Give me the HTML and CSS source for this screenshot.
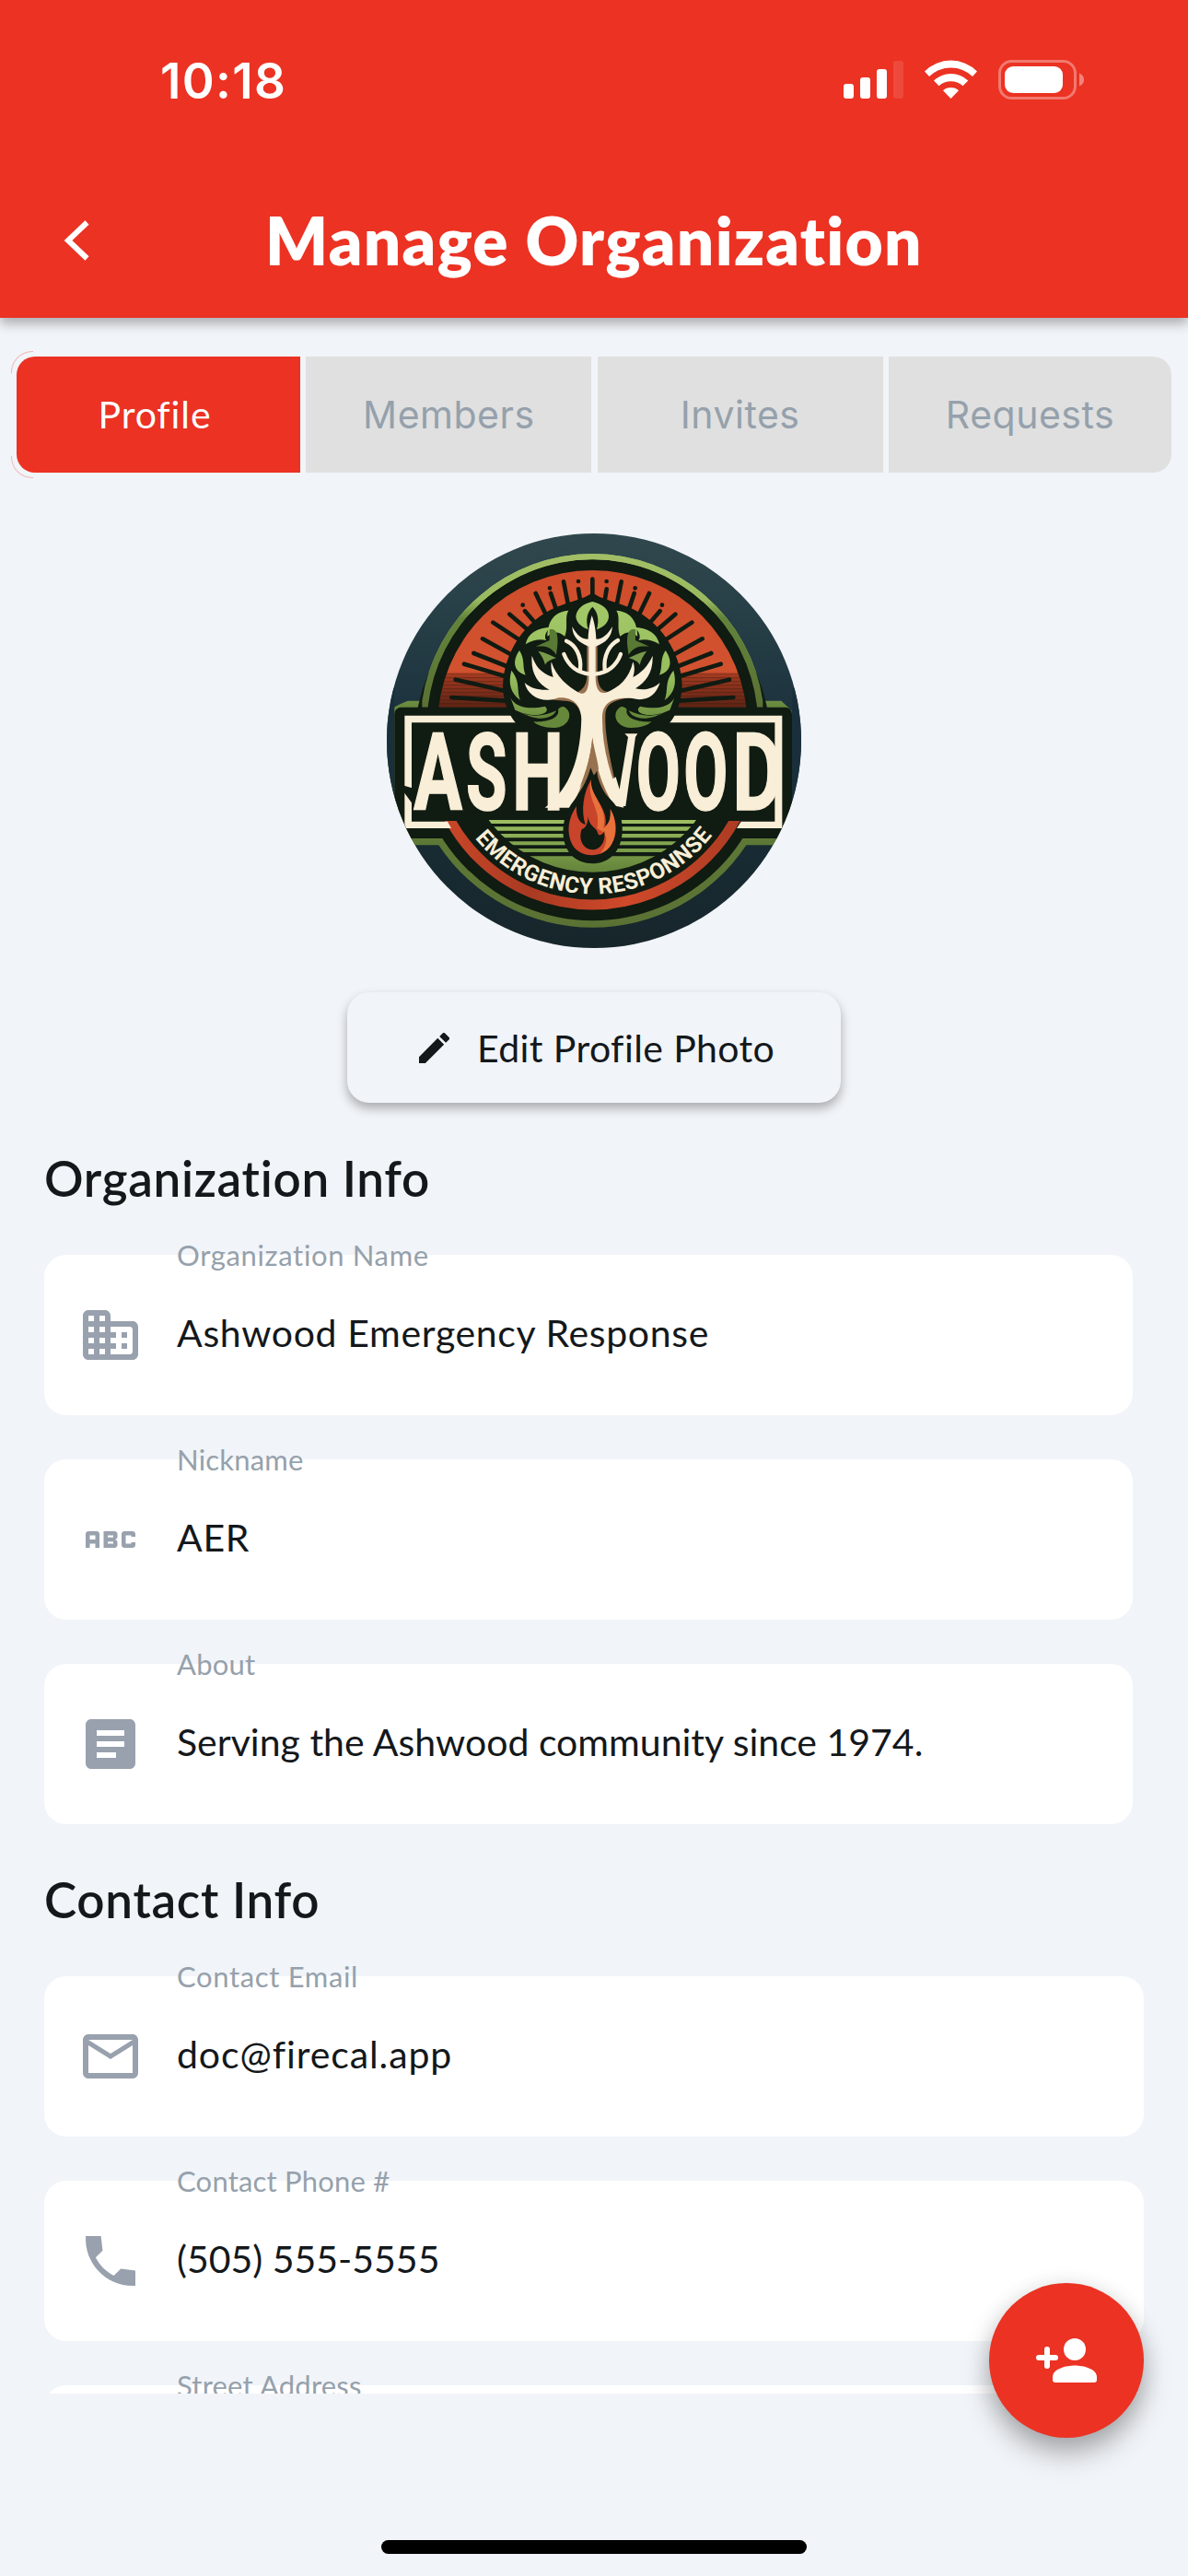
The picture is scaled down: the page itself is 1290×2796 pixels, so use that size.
FILE: index.html
```html
<!DOCTYPE html>
<html lang="en">
<head>
<meta charset="utf-8">
<title>Manage Organization</title>
<link rel="stylesheet" href="styles.css">
</head>
<body>
<div class="screen">
  <header class="header">
    <div class="status">
      <span class="time">10:18</span>
      <svg class="status-icons" viewBox="916 65 262 43">
        <g fill="#fff">
          <rect x="916" y="91" width="11" height="16" rx="3"/>
          <rect x="934" y="84" width="11" height="23" rx="3"/>
          <rect x="952" y="75" width="11" height="32" rx="3"/>
          <rect x="970" y="66" width="11" height="41" rx="3" opacity=".12"/>
          <path d="M1004 77.500A40 40 0 0 1 1061 77.500L1056 83A34 34 0 0 0 1009 83Z"/>
          <path d="M1014 87.500A27 27 0 0 1 1051.300 87.500L1045.500 93.300A19.500 19.500 0 0 0 1019.500 93.300Z"/>
          <path d="M1024 98.300A12.500 12.500 0 0 1 1041 98.300L1032.500 107Z"/>
          <rect x="1091" y="72" width="63" height="29" rx="9"/>
          <path opacity=".4" d="M1172 79.500Q1177 81.500 1177 86.500T1172 93.500Z"/>
        </g>
        <rect x="1085.500" y="66.500" width="82" height="40" rx="13" fill="none" stroke="#fff" stroke-width="3" opacity=".35"/>
      </svg>
    </div>
    <div class="titlebar">
      <svg class="back" viewBox="0 0 28 44"><path d="M25.500 2.500L5 22L25.500 41.500" fill="none" stroke="#fff" stroke-width="6"/></svg>
      <h1 class="title">Manage Organization</h1>
    </div>
  </header>

  <nav class="tabs">
    <div class="tab active">Profile</div>
    <div class="tab">Members</div>
    <div class="tab">Invites</div>
    <div class="tab">Requests</div>
  </nav>

  <main class="content">
    <svg class="logo" viewBox="60 57 1350 1350">
      <defs>
        <linearGradient id="sky" x1="0" y1="0" x2="0" y2="1"><stop offset="0" stop-color="#30484d"/><stop offset=".5" stop-color="#19303c"/><stop offset="1" stop-color="#17262b"/></linearGradient>
        <linearGradient id="rim" x1="0" y1="0" x2="0" y2="1"><stop offset="0" stop-color="#a3bf66"/><stop offset=".3" stop-color="#9aba5f"/><stop offset=".42" stop-color="#62833a"/><stop offset="1" stop-color="#5a7133"/></linearGradient>
        <linearGradient id="dome" x1="0" y1="177" x2="0" y2="622" gradientUnits="userSpaceOnUse"><stop offset="0" stop-color="#cf4d2b"/><stop offset=".74" stop-color="#d2522f"/><stop offset=".77" stop-color="#a13a21"/><stop offset="1" stop-color="#5e2415"/></linearGradient>
        <linearGradient id="band" x1="0" y1="0" x2="1" y2="0"><stop offset="0" stop-color="#d0492a"/><stop offset=".3" stop-color="#a83a22"/><stop offset=".6" stop-color="#d0492a"/><stop offset="1" stop-color="#a83a22"/></linearGradient>
        <linearGradient id="grass" x1="0" y1="990" x2="0" y2="1160" gradientUnits="userSpaceOnUse"><stop offset="0" stop-color="#9dbf62"/><stop offset="1" stop-color="#628339"/></linearGradient>
        <linearGradient id="leaf" x1="0" y1="280" x2="0" y2="690" gradientUnits="userSpaceOnUse"><stop offset="0" stop-color="#a3c868"/><stop offset=".6" stop-color="#96bd5c"/><stop offset="1" stop-color="#66883a"/></linearGradient>
        <clipPath id="disc"><circle cx="735" cy="732" r="675"/></clipPath>
        <clipPath id="upper"><rect x="60" y="57" width="1350" height="566"/></clipPath>
        <clipPath id="lower"><rect x="60" y="993" width="1350" height="420"/></clipPath>
        <clipPath id="meadow"><circle cx="730" cy="738" r="422"/></clipPath>
        <path id="motto" d="M347 1049A494 494 0 0 0 1125 1034"/>
        <g id="rays" fill="none" stroke="#101b12" stroke-width="14" stroke-linecap="round">
          <path d="M271 591L450 602M284 533L450 571M312 482L455 525M343 447L465 495M372 400L480 460M406 347L505 412M460 320L525 376M510 310L545 350M545 252L580 325M594 252L612 305M636 214L652 295M684 238L690 275"/>
          <path d="M503 290h.1M591 235h.1M684 213h.1"/>
        </g>
        <g id="foliage">
          <path fill="url(#leaf)" d="M583 392C585 335 610 312 652 308C638 330 652 360 640 392C620 375 603 375 583 392Z"/>
          <path fill="#587a34" d="M590 370C610 365 625 380 612 452C590 420 570 425 545 425L590 405Z"/>
          <path fill="url(#leaf)" d="M512 418C520 380 550 365 595 362C575 378 572 395 580 405C555 400 535 405 512 418Z"/>
          <path fill="url(#leaf)" d="M492 438C470 470 470 505 512 518C500 490 512 470 492 438Z"/>
          <path fill="url(#leaf)" d="M466 503C455 545 462 575 495 600C482 568 496 540 466 503Z"/>
          <path fill="url(#leaf)" d="M463 592C478 622 520 632 575 620C600 640 550 665 478 632Z"/>
          <path fill="#66883a" d="M538 670C590 672 625 655 618 630C625 622 632 620 638 622C670 640 655 690 605 690C570 690 550 682 538 670Z"/>
          <path fill="#66883a" d="M490 636C520 655 570 655 612 634C600 662 550 672 490 636Z"/>
          <path fill="#78994a" d="M553 440C580 445 595 455 612 462C590 470 580 475 576 485C572 468 565 455 553 440Z"/>
        </g>
      </defs>
      <g clip-path="url(#disc)">
        <rect x="60" y="57" width="1350" height="1350" fill="url(#sky)"/>
        <path fill="url(#rim)" d="M128 602H175A561 561 0 0 1 1285 602H1345L1380 635V1072H1231A602 602 0 0 1 229 1072H60V635L105 612Z"/>
        <path fill="#19303c" d="M60 560H85V1020H60ZM1381 560H1412V1020H1381Z"/>
        <g fill="#101b12">
          <circle cx="730" cy="681" r="539"/>
          <circle cx="730" cy="738" r="580"/>
          <rect x="85" y="623" width="1295" height="427" rx="22"/>
        </g>
        <path clip-path="url(#upper)" fill="url(#rim)" d="M175 623V602A561 561 0 0 1 1285 602V623H1266A539 539 0 0 0 194 623Z"/>
        <circle cx="730" cy="681" r="504" fill="url(#dome)" clip-path="url(#upper)"/>
        <path stroke="#3b1c12" stroke-width="2" opacity=".65" d="M250 515H1210M246 527H1214M242 539H1218M239 551H1221M237 563H1223M235 575H1225M233 587H1227M231 599H1229M230 611H1230"/>
        <use href="#rays"/><use href="#rays" transform="matrix(-1 0 0 1 1460 0)"/>
        <path d="M730 206V260" stroke="#101b12" stroke-width="14" stroke-linecap="round"/>
        <circle cx="730" cy="738" r="528" fill="none" stroke="url(#band)" stroke-width="33" clip-path="url(#lower)"/>
        <g clip-path="url(#meadow)" fill="url(#grass)">
          <path d="M300 990H1160V1002H300ZM300 1012H1160V1025H300ZM300 1035H1160V1048H300ZM300 1060H1160V1072H300ZM300 1083H1160V1095H300ZM300 1108H1160V1170H300Z"/>
        </g>
        <path fill="#f9eed7" d="M118 650H1348V1017H1200L1214 995H1324V673H141V1017H118ZM118 995H258L270 1017H118Z"/>
        <path fill="#101b12" d="M116 878L150 888L142 935L116 900Z"/>
        <path fill="#101b12" d="M730 250C755 270 800 278 850 298A290 290 0 0 1 1022 552C1020 600 1005 655 970 685H490C455 650 438 600 438 552A290 290 0 0 1 610 298C660 278 705 270 730 250Z"/>
        <use href="#foliage"/><use href="#foliage" transform="matrix(-1 0 0 1 1460 0)"/>
        <path fill="url(#leaf)" d="M730 279C765 288 785 305 783 330C780 350 765 362 744 370C754 335 745 310 730 296C715 310 706 335 716 370C690 360 677 345 676 328C678 302 700 285 730 279Z"/>
      </g>
      <g class="wordmark">
        <text x="148" y="957" textLength="158" lengthAdjust="spacingAndGlyphs">A</text>
        <text x="318" y="957" textLength="134" lengthAdjust="spacingAndGlyphs">S</text>
        <text x="468" y="957" textLength="168" lengthAdjust="spacingAndGlyphs">H</text>
        <text x="872" y="957" textLength="144" lengthAdjust="spacingAndGlyphs">O</text>
        <text x="1027" y="957" textLength="144" lengthAdjust="spacingAndGlyphs">O</text>
        <text x="1186" y="957" textLength="164" lengthAdjust="spacingAndGlyphs">D</text>
      </g>
      <g>
        <path fill="#98714f" d="M712 400H746V520C748 560 765 580 800 572L855 590C800 600 772 610 772 650C770 720 790 800 822 946L800 945C765 900 745 860 745 830C735 850 700 870 670 930L640 948C680 880 700 800 695 660C690 620 670 602 640 602L570 596C640 585 712 590 712 520Z"/>
        <path fill="#f9eed7" d="M728 324C736 345 742 375 742 402C765 400 780 385 795 360C792 395 775 412 740 425V510C738 560 750 582 775 575C815 560 850 530 862 475C868 490 868 505 862 525C890 510 910 490 926 455C928 510 905 540 870 562C905 570 930 560 950 543C935 590 900 605 860 594C800 590 765 605 762 650C760 760 790 850 832 950L800 943C760 880 735 800 730 720C722 800 700 880 660 950L575 950C640 900 690 820 694 660C692 610 660 588 620 592C570 612 520 590 509 543C530 562 555 568 590 566C550 545 528 510 533 455C545 490 560 510 602 525C596 505 594 490 596 475C612 525 650 555 685 575C710 588 720 560 718 510V425C685 412 665 395 664 360C680 390 695 400 716 402C716 375 722 345 728 324Z"/>
        <path fill="none" stroke="#f9eed7" stroke-width="13" stroke-linecap="round" d="M722 515C690 512 655 495 637 450M690 500C695 455 675 420 645 407M738 515C770 512 805 495 822 450M770 500C765 455 785 420 813 405"/>
        <path fill="#f9eed7" d="M835 709H877L870 720L838 945H808L775 870L806 850L818 890L846 720Z"/>
        <path fill="#98714f" d="M730 725C738 770 748 800 750 825C735 828 715 840 688 885C710 830 724 780 730 725Z"/>
      </g>
      <g>
        <path fill="#101b12" d="M724 820C745 875 770 905 800 935C850 1000 835 1130 730 1132C625 1130 615 1010 660 940C690 900 710 870 724 820Z"/>
        <path fill="#c8442a" d="M726 858C718 910 785 950 772 1010C790 995 790 975 788 955C808 985 815 1035 792 1070C765 1115 690 1118 663 1068C645 1030 650 985 678 945C676 975 685 1000 707 1005C692 960 700 900 726 858Z"/>
        <path fill="#e8713c" d="M726 858C718 910 785 950 765 1018C785 1005 790 985 788 955C815 1000 812 1080 755 1100C795 1050 765 1025 745 1018C760 950 708 925 726 858Z"/>
        <path fill="#101b12" d="M716 978C717 1010 745 1015 748 1034C750 1045 768 1035 768 1025C775 1060 755 1087 730 1087C700 1085 683 1055 695 1020C708 1018 715 1000 716 978Z"/>
      </g>
      <text class="motto"><textPath href="#motto" textLength="888" lengthAdjust="spacing">EMERGENCY RESPONNSE</textPath></text>
    </svg>

    <button class="edit">
      <svg class="pencil" viewBox="3 3 18 18"><path fill="#14181b" d="M3 17.250V21h3.750L17.810 9.940l-3.750-3.750L3 17.250zM20.710 7.040a1 1 0 0 0 0-1.410l-2.340-2.340a1 1 0 0 0-1.410 0l-1.830 1.830 3.750 3.750 1.830-1.830z"/></svg>
      <span>Edit Profile Photo</span>
    </button>

    <section class="group">
      <h2 class="heading">Organization Info</h2>
      <div class="field">
        <span class="label loose">Organization Name</span>
        <svg class="icon" viewBox="0 0 24 24"><path d="M12 7V5c0-1.100-.9-2-2-2H4c-1.100 0-2 .9-2 2v14c0 1.100.9 2 2 2h16c1.100 0 2-.9 2-2V9c0-1.100-.9-2-2-2h-8zM6 19H4v-2h2v2zm0-4H4v-2h2v2zm0-4H4V9h2v2zm0-4H4V5h2v2zm4 12H8v-2h2v2zm0-4H8v-2h2v2zm0-4H8V9h2v2zm0-4H8V5h2v2zm9 12h-7v-2h2v-2h-2v-2h2v-2h-2V9h7c.55 0 1 .45 1 1v8c0 .55-.45 1-1 1zm-1-8h-2v2h2v-2zm0 4h-2v2h2v-2z"/></svg>
        <span class="value loose">Ashwood Emergency Response</span>
      </div>
      <div class="field">
        <span class="label">Nickname</span>
        <svg class="icon" viewBox="0 0 24 24"><path d="M21 11h-1.500v-.5h-2v3h2V13H21v1c0 .55-.45 1-1 1h-3c-.55 0-1-.45-1-1v-4c0-.55.45-1 1-1h3c.55 0 1 .45 1 1v1zM8 10v5H6.500v-1.500h-2V15H3v-5c0-.55.45-1 1-1h3c.55 0 1 .45 1 1zm-1.500.5h-2V12h2v-1.500zm7 1.500c.55 0 1 .45 1 1v1c0 .55-.45 1-1 1h-4V9h4c.55 0 1 .45 1 1v1c0 .55-.45 1-1 1zM11 10.500v.75h2v-.75h-2zm2 2.250h-2v.75h2v-.75z"/></svg>
        <span class="value loose">AER</span>
      </div>
      <div class="field">
        <span class="label">About</span>
        <svg class="icon" viewBox="0 0 24 24"><path d="M19 3H5c-1.100 0-2 .9-2 2v14c0 1.100.9 2 2 2h14c1.100 0 2-.9 2-2V5c0-1.100-.9-2-2-2zm-5 14H7v-2h7v2zm3-4H7v-2h10v2zm0-4H7V7h10v2z"/></svg>
        <span class="value">Serving the Ashwood community since 1974.</span>
      </div>
    </section>

    <section class="group wide">
      <h2 class="heading">Contact Info</h2>
      <div class="field">
        <span class="label loose">Contact Email</span>
        <svg class="icon" viewBox="0 0 24 24"><path d="M22 6c0-1.100-.9-2-2-2H4c-1.100 0-2 .9-2 2v12c0 1.100.9 2 2 2h16c1.100 0 2-.9 2-2V6zm-2 0l-8 5-8-5h16zm0 12H4V8l8 5 8-5v10z"/></svg>
        <span class="value looser">doc@firecal.app</span>
      </div>
      <div class="field">
        <span class="label">Contact Phone #</span>
        <svg class="icon" viewBox="0 0 24 24"><path d="M21 15.460l-5.270-.61-2.520 2.520c-2.830-1.440-5.150-3.750-6.590-6.590l2.530-2.530L8.540 3H3.030C2.450 13.180 10.820 21.550 21 20.970v-5.510z"/></svg>
        <span class="value">(505) 555-5555</span>
      </div>
      <div class="field">
        <span class="label">Street Address</span>
      </div>
    </section>
  </main>

  <footer class="footer"><div class="home"></div></footer>

  <button class="fab" aria-label="Add member">
    <svg class="fab-icon" viewBox="1125 2538 66 48"><g fill="#fff"><circle cx="1167" cy="2550" r="12"/><path d="M1143 2583V2580C1143 2571 1158 2567.500 1167 2567.500S1191 2571 1191 2580V2583Q1191 2586 1188 2586H1146Q1143 2586 1143 2583Z"/></g><path d="M1137 2550V2568M1128 2559H1146" stroke="#fff" stroke-width="6" stroke-linecap="round"/></svg>
  </button>
</div>
</body>
</html>
```
FILE: styles.css
```css
* { box-sizing: border-box; }
body {
  margin: 0;
  background: #f1f4f8;
  color: #14181b;
  font-family: Lato, "Liberation Sans", sans-serif;
}
h1, h2 { margin: 0; }
button { border: 0; padding: 0; color: inherit; font-family: inherit; }
svg { display: block; flex: none; }

.screen {
  position: relative;
  display: flex;
  flex-direction: column;
  width: 1290px;
  height: 2796px;
  overflow: hidden;
  background: #f1f4f8;
}

.header {
  flex: none;
  height: 345px;
  background: #eb3223;
  color: #fff;
  box-shadow: 0 6px 12px rgba(0, 0, 0, .3);
}
.status {
  display: flex;
  justify-content: space-between;
  height: 177px;
  padding: 65px 112px 0 174px;
}
.time { font: 600 53px/46px Inter, sans-serif; letter-spacing: 1.3px; }
.status-icons { width: 262px; height: 43px; }
.titlebar {
  display: grid;
  grid-template-columns: 28px 1fr 28px;
  align-items: center;
  height: 168px;
  padding: 0 69px;
}
.back { width: 28px; height: 44px; }
.title {
  font-size: 71px;
  line-height: 84px;
  font-weight: 800;
  letter-spacing: 1.3px;
  text-align: center;
  white-space: nowrap;
}

.tabs {
  flex: none;
  display: grid;
  grid-template-columns: 308px 310px 310px 307px;
  justify-content: space-between;
  height: 126px;
  margin: 42px 18px 66px;
}
.tab {
  display: flex;
  align-items: center;
  justify-content: center;
  background: #e0e0e0;
  color: #95a1ac;
  font: 400 41px/48px Inter, sans-serif;
  letter-spacing: .5px;
}
.tab.active {
  position: relative;
  padding-right: 8px;
  border-radius: 20px 0 0 20px;
  background: #eb3223;
  color: #fff;
  font-family: Lato, sans-serif;
  letter-spacing: .9px;
}
.tab.active::before,
.tab.active::after {
  content: "";
  position: absolute;
  left: -6px;
  width: 23px;
  height: 23px;
  border-left: 1px solid rgba(235, 50, 35, .3);
}
.tab.active::before {
  top: -6px;
  border-top: 1px solid rgba(235, 50, 35, .3);
  border-top-left-radius: 23px;
}
.tab.active::after {
  bottom: -6px;
  border-bottom: 1px solid rgba(235, 50, 35, .3);
  border-bottom-left-radius: 23px;
}
.tab:last-child { border-radius: 0 20px 20px 0; }

.content {
  flex: none;
  display: flex;
  flex-direction: column;
  height: 2019px;
  overflow: hidden;
}
.logo { width: 450px; height: 450px; margin: 0 auto; }
.wordmark {
  font: 700 348px Roboto, sans-serif;
  fill: #f9eed7;
  stroke: #f9eed7;
  stroke-width: 5px;
}
.motto { font: 700 73px Roboto, sans-serif; fill: #f9eed7; }

.edit {
  flex: none;
  display: flex;
  align-items: center;
  gap: 30px;
  width: 536px;
  height: 120px;
  margin: 48px auto 0;
  padding-left: 78px;
  border-radius: 24px;
  background: #f1f4f8;
  box-shadow: 0 6px 12px rgba(0, 0, 0, .3);
  font-size: 41px;
  letter-spacing: .4px;
}
.pencil { width: 33px; height: 33px; }

.group {
  flex: none;
  display: flex;
  flex-direction: column;
  gap: 48px;
  padding: 47px 60px 0 48px;
}
.wide { padding-right: 48px; }
.heading {
  height: 70px;
  font-size: 53px;
  line-height: 70px;
  font-weight: 600;
  letter-spacing: .7px;
}
.field {
  position: relative;
  display: flex;
  align-items: center;
  height: 174px;
  padding-left: 36px;
  border-radius: 24px;
  background: #fff;
}
.label {
  position: absolute;
  left: 144px;
  top: -20px;
  color: #95a1ac;
  font-size: 31px;
  line-height: 40px;
  letter-spacing: .2px;
}
.icon { width: 72px; height: 72px; fill: #98a1ad; }
.value { margin-left: 36px; padding-bottom: 5px; font-size: 41px; line-height: 50px; }
.loose { letter-spacing: .65px; }
.looser { letter-spacing: .9px; }

.footer {
  flex: 1;
  display: flex;
  justify-content: center;
  align-items: flex-end;
  padding-bottom: 24px;
}
.home { width: 462px; height: 15px; border-radius: 8px; background: #000; }

.fab {
  position: absolute;
  right: 48px;
  bottom: 150px;
  display: grid;
  place-items: center;
  width: 168px;
  height: 168px;
  border-radius: 50%;
  background: #eb3223;
  box-shadow: 0 18px 30px rgba(0, 0, 0, .26), 0 4px 24px rgba(0, 0, 0, .12);
}
.fab-icon { width: 66px; height: 48px; }
```
